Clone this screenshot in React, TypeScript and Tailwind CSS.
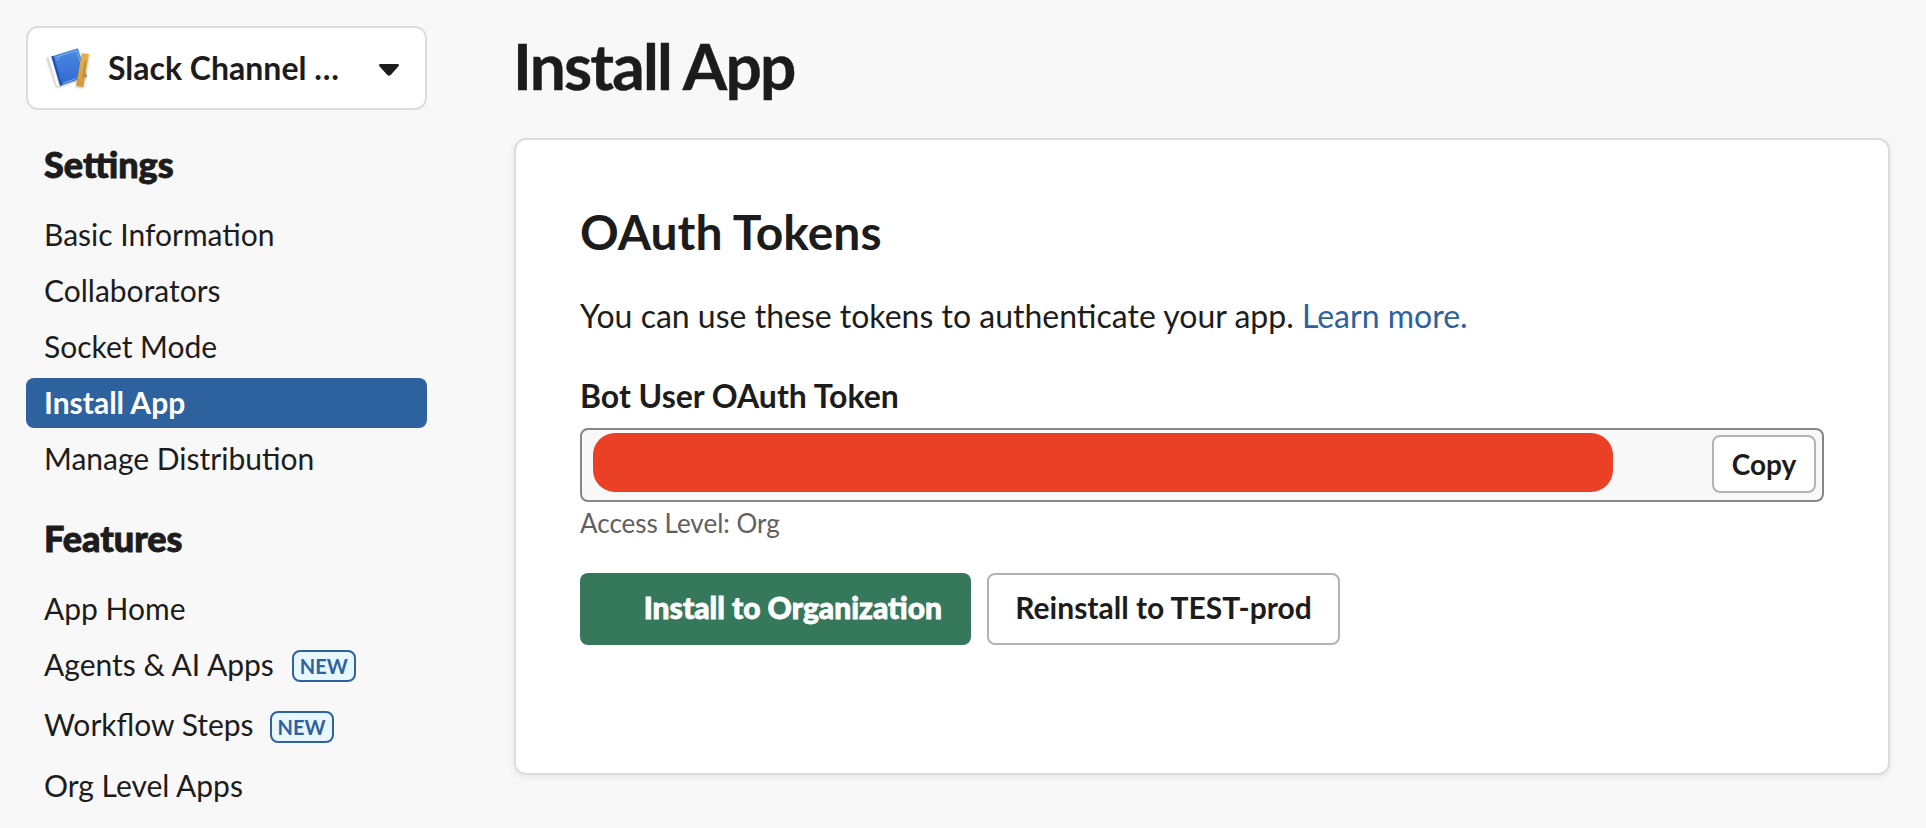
type NavItem = { label: string; active?: boolean; spacing?: string; badge?: string };

const settings: NavItem[] = [
  { label: "Basic Information" },
  { label: "Collaborators" },
  { label: "Socket Mode" },
  { label: "Install App", active: true },
  { label: "Manage Distribution" },
];

const features: NavItem[] = [
  { label: "App Home" },
  { label: "Agents & AI Apps", badge: "mt-[10px] ml-[18px]" },
  { label: "Workflow Steps", badge: "mt-[11px] ml-[16px]", spacing: "mt-1" },
  { label: "Org Level Apps", spacing: "mt-[5px]" },
];

function AppIcon() {
  return (
    <svg width="48" height="48" viewBox="0 0 48 48" className="shrink-0">
      <defs>
        <linearGradient id="cover" x1="0" y1="0" x2="0" y2="1">
          <stop offset="0" stopColor="#4a8ae0" />
          <stop offset="1" stopColor="#2f68d2" />
        </linearGradient>
        <linearGradient id="ruler" x1="0" y1="0" x2="0" y2="1">
          <stop offset="0" stopColor="#e3b04f" />
          <stop offset="1" stopColor="#d49a3e" />
        </linearGradient>
        <filter id="soft" x="-20%" y="-20%" width="140%" height="140%">
          <feDropShadow dx="0" dy="1" stdDeviation="0.8" floodColor="#000" floodOpacity="0.3" />
        </filter>
      </defs>
      <g filter="url(#soft)">
        <path d="M3.600 13.400L8.500 12l8.500 29.500-3.500 1.600z" fill="#d4d4d4" />
        <path d="M5.200 13l2.800-.5 8 29-2.200.8z" fill="#fafafa" />
        <path d="M8.500 12.400L34.800 4.300l9 28.200-26.600 9.300z" fill="url(#cover)" />
      </g>
      <path d="M8.500 12.400l2-.6 8.600 29.400-1.900.6z" fill="#1f50aa" />
      <path d="M12 13.400L33.700 6.700l8 25-21.700 7.500M15.600 12.400l.5 2.200-3 1.200" fill="none" stroke="#8db9f2" strokeWidth=".8" />
      <g filter="url(#soft)">
        <path d="M38.800 9.200l7.200.8-5.600 33-7.400-1.100z" fill="url(#ruler)" />
      </g>
      <path d="M42.500 17l-2.600 17" stroke="#96712e" strokeWidth=".8" />
    </svg>
  );
}

function NavSection({ title, items }: { title: string; items: NavItem[] }) {
  return (
    <section>
      <h2 className="mb-6 h-11 px-[18px] text-[36px] leading-[44px] font-black [-webkit-text-stroke:0.9px_#1d1c1d]">
        {title}
      </h2>
      <ul className="flex flex-col gap-1.5">
        {items.map((item) => (
          <li
            key={item.label}
            className={`flex h-[50px] items-start rounded-lg px-[18px] text-[30px] leading-[49px] ${
              item.active ? "bg-[#2d629e] font-bold text-white" : ""
            } ${item.spacing ?? ""}`}
          >
            <span>{item.label}</span>
            {item.badge && (
              <span
                className={`flex h-8 w-16 items-center justify-center rounded-lg border-2 border-[#2d629e] bg-[#e8f7ff] text-[20px] leading-7 font-bold text-[#2d629e] ${item.badge}`}
              >
                NEW
              </span>
            )}
          </li>
        ))}
      </ul>
    </section>
  );
}

export default function App() {
  return (
    <div className="flex h-[828px] w-[1926px] overflow-hidden bg-[#f8f8f8] pt-[26px] pl-[26px] font-[Lato,sans-serif] text-[#1d1c1d]">
      <aside className="w-[401px] shrink-0">
        <button className="flex h-[84px] w-full items-center rounded-xl border-2 border-[#dddddd] bg-white pr-[25px] pl-[15px] text-left">
          <AppIcon />
          <span className="ml-[17px] flex-1 text-[32px] leading-10 font-bold whitespace-nowrap">Slack Channel …</span>
          <svg width="22" height="14" viewBox="0 0 22 14" className="mt-1">
            <path
              d="M2.500 1h17c1.600 0 2 1.300 1 2.300l-7.600 8.400c-1.100 1.200-2.700 1.200-3.800 0L1.500 3.300C.5 2.300.9 1 2.500 1z"
              fill="#1d1c1d"
            />
          </svg>
        </button>
        <nav className="mt-8 flex flex-col gap-8">
          <NavSection title="Settings" items={settings} />
          <NavSection title="Features" items={features} />
        </nav>
      </aside>

      <main className="ml-[87px] w-[1376px]">
        <h1 className="mb-[34px] h-[78px] text-[64px] leading-[80px] font-bold tracking-[-1.8px] indent-[-1px] [-webkit-text-stroke:0.4px_#1d1c1d]">
          Install App
        </h1>
        <div className="h-[637px] rounded-xl border-2 border-[#dddddd] bg-white px-16 pt-[63px] shadow-[0_2px_6px_rgba(0,0,0,0.08)]">
          <h2 className="text-[48px] leading-[58px] font-bold">OAuth Tokens</h2>
          <p className="mt-[31px] text-[32px] leading-[48px]">
            You can use these tokens to authenticate your app.{" "}
            <a href="#" className="text-[#2d629e]">
              Learn more.
            </a>
          </p>
          <h3 className="mt-8 text-[32px] leading-[48px] font-bold">Bot User OAuth Token</h3>
          <div className="mt-2 flex h-[74px] w-[1244px] justify-between rounded-lg border-2 border-[#868686] bg-[#f8f8f8] pr-1.5 pl-[11px]">
            <div className="mt-[3px] h-[59px] w-[1020px] rounded-[22px] bg-[#ea4026]" />
            <button className="mt-[5px] h-[58px] w-[104px] rounded-lg border-2 border-[#b3b3b3] bg-white text-[28px] leading-[54px] font-bold">
              Copy
            </button>
          </div>
          <p className="mt-0.5 text-[26px] leading-[38px] text-[#616061]">Access Level: Org</p>
          <div className="mt-[31px] flex gap-4">
            <button className="flex h-[72px] w-[391px] justify-end rounded-lg bg-[#35785b] pr-[29px] text-[30px] leading-[69px] font-black text-white [-webkit-text-stroke:0.8px_white]">
              Install to Organization
            </button>
            <button className="flex h-[72px] w-[353px] justify-center rounded-lg border-2 border-[#b3b3b3] bg-white text-[30px] leading-[65px] font-bold">
              Reinstall to TEST-prod
            </button>
          </div>
        </div>
      </main>
    </div>
  );
}
